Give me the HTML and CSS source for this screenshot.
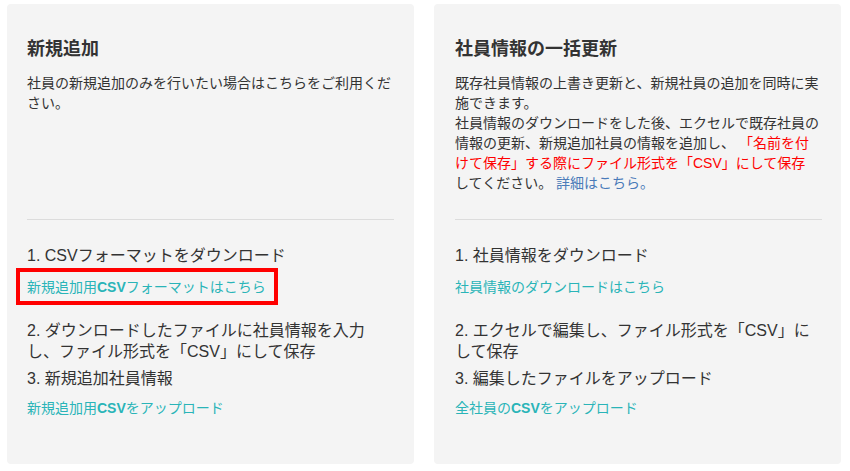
FILE: index.html
```html
<html>
<head>
    <title>CSV一括登録</title>
    <link rel="stylesheet" href="styles.css">
</head>
<body>
    <div class="cards">
        <div class="card">
            <div class="card-head">
                <h2>新規追加</h2>
                <p class="desc">社員の新規追加のみを行いたい場合はこちらをご利用ください。</p>
            </div>
            <div class="steps">
                <p class="step">1. CSVフォーマットをダウンロード</p>
                <p class="link"><a href="#" class="marked">新規追加用<b>CSV</b>フォーマットはこちら</a></p>
                <p class="step">2. ダウンロードしたファイルに社員情報を入力し、ファイル形式を「CSV」にして保存</p>
                <p class="step">3. 新規追加社員情報</p>
                <p class="link"><a href="#">新規追加用<b>CSV</b>をアップロード</a></p>
            </div>
        </div>
        <div class="card">
            <div class="card-head">
                <h2>社員情報の一括更新</h2>
                <p class="desc">既存社員情報の上書き更新と、新規社員の追加を同時に実施できます。<br>社員情報のダウンロードをした後、エクセルで既存社員の情報の更新、新規追加社員の情報を追加し、 <span class="warn">「名前を付けて保存」する際にファイル形式を「CSV」にして保存</span>してください。 <a href="#" class="more">詳細はこちら。</a></p>
            </div>
            <div class="steps">
                <p class="step">1. 社員情報をダウンロード</p>
                <p class="link"><a href="#">社員情報のダウンロードはこちら</a></p>
                <p class="step">2. エクセルで編集し、ファイル形式を「CSV」にして保存</p>
                <p class="step">3. 編集したファイルをアップロード</p>
                <p class="link"><a href="#">全社員の<b>CSV</b>をアップロード</a></p>
            </div>
        </div>
    </div>
</body>
</html>
```

FILE: styles.css
```css
body {
    margin: 0;
    padding: 4px 9px 0 7px;
    background: #fff;
    color: #333;
    font-family: "Liberation Sans", "Noto Sans CJK JP", sans-serif;
}
.cards {
    display: flex;
    gap: 20px;
}
.card {
    width: 407px;
    height: 460px;
    box-sizing: border-box;
    padding: 32px 20px 0 20px;
    background: #f4f4f4;
    border-radius: 4px;
}
.card + .card {
    padding-left: 21px;
    padding-right: 19px;
}
.card-head {
    height: 183px;
    border-bottom: 1px solid #dcdcdc;
}
h2 {
    margin: 0;
    font-size: 18px;
    line-height: 26px;
    font-weight: bold;
    color: #333;
}
.desc {
    margin: 11px 0 0 0;
    padding-right: 3px;
    font-size: 14px;
    line-height: 20px;
}
.warn {
    color: #ff0000;
}
.more {
    color: #4a7bb9;
    text-decoration: none;
}
.steps {
    padding-top: 25px;
}
.step {
    margin: 6px 0 0 0;
    padding-right: 3px;
    font-size: 16px;
    line-height: 21px;
}
.steps .step:first-child {
    margin-top: 0;
}
.link {
    margin: 11px 0 0 0;
    font-size: 14px;
    line-height: 20px;
}
.step + .step + .link {
    margin-top: 9px;
}
.link + .step {
    margin-top: 23px;
}
.link a {
    color: #2ab4b8;
    text-decoration: none;
}
/* red marker drawn over the link */
.marked {
    position: relative;
    display: inline-block;
}
.marked::after {
    content: "";
    position: absolute;
    top: -9px;
    right: -12px;
    bottom: -8px;
    left: -11px;
    border: 4px solid #ff0000;
}
```
